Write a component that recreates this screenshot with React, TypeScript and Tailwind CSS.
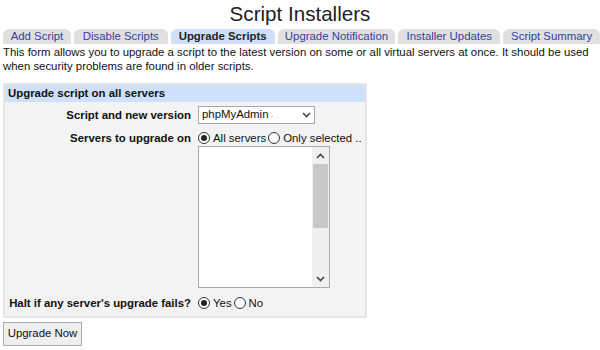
import React from 'react';

const tabs = [
  { name: 'Add Script', w: 'w-[68px]' },
  { name: 'Disable Scripts', w: 'w-[94px]' },
  { name: 'Upgrade Scripts', w: 'w-[104px]', active: true },
  { name: 'Upgrade Notification', w: 'w-[118px]' },
  { name: 'Installer Updates', w: 'w-[102px]' },
  { name: 'Script Summary', w: 'w-[97px]' },
];

const Radio = ({ checked }: { checked?: boolean }) => (
  <span className="inline-flex items-center justify-center w-[12px] h-[12px] rounded-full border border-[#333] bg-white mr-[3px]">
    {checked && <span className="w-[6px] h-[6px] rounded-full bg-[#222]" />}
  </span>
);

const Chevron = ({ up }: { up?: boolean }) => (
  <svg width="9" height="6" viewBox="0 0 9 6">
    <path d={up ? 'M1 5 L4.5 1.5 L8 5' : 'M1 1 L4.5 4.5 L8 1'} fill="none" stroke="#444" strokeWidth="1.6" />
  </svg>
);

export default function App() {
  return (
    <div className="w-[600px] h-[350px] bg-white overflow-hidden font-['Liberation_Sans',Arial,sans-serif] text-[11.4px] text-[#111]">
      <h1 className="text-center text-[20.6px] leading-[26px] pt-[1px] text-[#222]">Script Installers</h1>
      <div className="flex gap-[3px] pl-[3px] mt-[2px]">
        {tabs.map((t) => (
          <div
            key={t.name}
            className={`${t.w} h-[15px] leading-[15px] text-center rounded-t-[6px] ${
              t.active ? 'bg-[#d0e0fb] font-bold text-[#222]' : 'bg-[#e0e0e0] text-[#2f3fa0]'
            }`}
          >
            {t.name}
          </div>
        ))}
      </div>
      <p className="px-[3px] leading-[14px] mt-[1px] text-[#111]">
        This form allows you to upgrade a script to the latest version on some or all virtual servers at once. It should be used when security problems are found in older scripts.
      </p>
      <div className="mx-[3px] mt-[10px] w-[364px] border-2 border-[#e6e6e6] bg-[#f3f3f3]">
        <div className="bg-[#cfe0fc] font-bold px-[3px] h-[17px] leading-[17px] text-[#111]">Upgrade script on all servers</div>
        <div className="grid grid-cols-[186px_1fr] gap-x-[7px] pt-[4px] pb-[5px]">
          <div className="text-right font-bold leading-[18px] whitespace-nowrap">Script and new version</div>
          <div>
            <div className="w-[117px] h-[18px] bg-white border border-[#a9a9a9] flex items-center justify-between px-[3px]">
              <span>
                phpMyAdmin<span className="text-[#9ab] text-[8px]"> - .</span>
              </span>
              <Chevron />
            </div>
          </div>
          <div className="text-right font-bold leading-[14px] mt-[7px] whitespace-nowrap">Servers to upgrade on</div>
          <div className="mt-[7px]">
            <div className="flex items-center h-[14px] leading-[14px] whitespace-nowrap">
              <Radio checked />
              <span className="mr-[2px]">All servers</span>
              <Radio />
              <span>Only selected ..</span>
            </div>
            <div className="mt-[1px] w-[132px] h-[142px] bg-white border border-[#a9a9a9] flex">
              <div className="flex-1" />
              <div className="w-[17px] bg-[#f0f0f0] flex flex-col items-center">
                <div className="h-[17px] flex items-center justify-center"><Chevron up /></div>
                <div className="w-[15px] h-[64px] bg-[#c8c8c8]" />
                <div className="flex-1" />
                <div className="h-[17px] flex items-center justify-center"><Chevron /></div>
              </div>
            </div>
          </div>
          <div className="text-right font-bold leading-[16px] mt-[7px] whitespace-nowrap">Halt if any server's upgrade fails?</div>
          <div className="flex items-center leading-[16px] mt-[7px]">
            <Radio checked />
            <span className="mr-[2px]">Yes</span>
            <Radio />
            <span>No</span>
          </div>
        </div>
      </div>
      <button className="ml-[3px] mt-[4px] h-[24px] w-[79px] bg-[#efefef] border border-[#acacac] text-[11.4px] text-[#111]">
        Upgrade Now
      </button>
    </div>
  );
}
